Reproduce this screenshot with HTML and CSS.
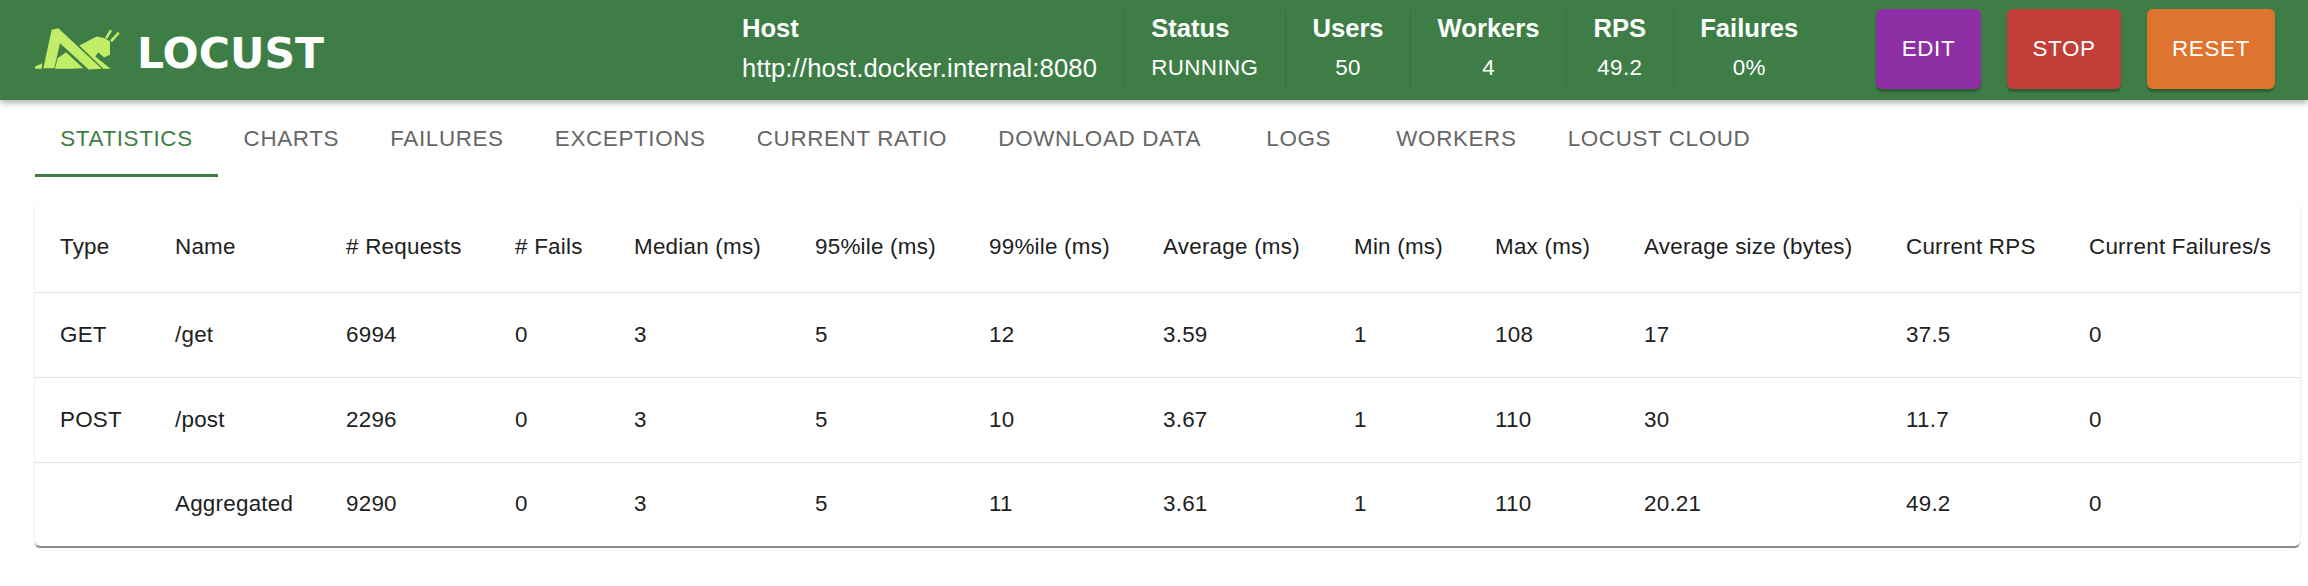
FILE: index.html
```html
<!DOCTYPE html>
<html lang="en">
<head>
    <meta charset="UTF-8">
    <meta name="viewport" content="width=device-width, initial-scale=1.0">
    <title>Locust</title>
    <link rel="stylesheet" href="styles.css">
</head>
<body>
    <!-- Top bar -->
    <header class="navbar">
        <div class="brand">
            <svg class="brand-logo" viewBox="45 40 255 125" width="85" height="42" aria-hidden="true">
                <g fill="#c1ee66">
                    <polygon points="45,162 45,155 67,145 65,162"/>
                    <polygon points="95,45 115,40 245,162 206,164 120,85 103,160 70,160"/>
                    <polygon points="105,162 113,130 138,112 190,160 150,162"/>
                    <polygon points="178,92 230,65 255,70 270,80 270,120 252,128 235,112 226,125 272,162 250,162"/>
                    <polygon points="255,68 270,44 276,48 262,72"/>
                    <polygon points="270,76 294,51 299,56 276,82"/>
                </g>
            </svg>
            <span class="brand-name">LOCUST</span>
        </div>

        <div class="stats">
            <div class="stat stat-left">
                <div class="stat-label">Host</div>
                <div class="stat-value stat-host">http://host.docker.internal:8080</div>
            </div>
            <div class="stat stat-left">
                <div class="stat-label">Status</div>
                <div class="stat-value">RUNNING</div>
            </div>
            <div class="stat">
                <div class="stat-label">Users</div>
                <div class="stat-value">50</div>
            </div>
            <div class="stat">
                <div class="stat-label">Workers</div>
                <div class="stat-value">4</div>
            </div>
            <div class="stat">
                <div class="stat-label">RPS</div>
                <div class="stat-value">49.2</div>
            </div>
            <div class="stat">
                <div class="stat-label">Failures</div>
                <div class="stat-value">0%</div>
            </div>
        </div>

        <div class="actions">
            <button class="btn btn-edit">EDIT</button>
            <button class="btn btn-stop">STOP</button>
            <button class="btn btn-reset">RESET</button>
        </div>
    </header>

    <!-- Tabs -->
    <nav class="tabs">
        <a class="tab active">STATISTICS</a>
        <a class="tab">CHARTS</a>
        <a class="tab">FAILURES</a>
        <a class="tab">EXCEPTIONS</a>
        <a class="tab">CURRENT RATIO</a>
        <a class="tab">DOWNLOAD DATA</a>
        <a class="tab">LOGS</a>
        <a class="tab">WORKERS</a>
        <a class="tab">LOCUST CLOUD</a>
    </nav>

    <!-- Statistics table -->
    <main class="card">
        <table class="stats-table">
            <colgroup>
                <col class="c-type"><col class="c-name"><col class="c-requests"><col class="c-fails">
                <col class="c-median"><col class="c-p95"><col class="c-p99"><col class="c-average">
                <col class="c-min"><col class="c-max"><col class="c-size"><col class="c-rps"><col class="c-fps">
            </colgroup>
            <thead>
                <tr>
                    <th>Type</th><th>Name</th><th># Requests</th><th># Fails</th>
                    <th>Median (ms)</th><th>95%ile (ms)</th><th>99%ile (ms)</th><th>Average (ms)</th>
                    <th>Min (ms)</th><th>Max (ms)</th><th>Average size (bytes)</th><th>Current RPS</th><th>Current Failures/s</th>
                </tr>
            </thead>
            <tbody>
                <tr>
                    <td>GET</td><td>/get</td><td>6994</td><td>0</td><td>3</td><td>5</td><td>12</td>
                    <td>3.59</td><td>1</td><td>108</td><td>17</td><td>37.5</td><td>0</td>
                </tr>
                <tr>
                    <td>POST</td><td>/post</td><td>2296</td><td>0</td><td>3</td><td>5</td><td>10</td>
                    <td>3.67</td><td>1</td><td>110</td><td>30</td><td>11.7</td><td>0</td>
                </tr>
                <tr>
                    <td></td><td>Aggregated</td><td>9290</td><td>0</td><td>3</td><td>5</td><td>11</td>
                    <td>3.61</td><td>1</td><td>110</td><td>20.21</td><td>49.2</td><td>0</td>
                </tr>
            </tbody>
        </table>
    </main>
</body>
</html>
```

FILE: styles.css
```css
* {
    margin: 0;
    padding: 0;
    box-sizing: border-box;
    font-family: 'Liberation Sans', Arial, sans-serif;
}

body {
    background: #fff;
    color: #212121;
}

/* Top bar */
.navbar {
    display: flex;
    align-items: center;
    height: 100px;
    padding: 0 33px 2px 35px;
    background: #3e7e46;
    color: #fff;
    box-shadow: 0 3px 6px rgba(0,0,0,0.3);
}

.brand {
    display: flex;
    align-items: center;
    gap: 17px;
    width: 680.5px;
}

.brand-name {
    margin-top: 8px;
    font-family: 'DejaVu Sans', 'Liberation Sans', sans-serif;
    font-size: 42.5px;
    font-weight: 700;
}

.stats {
    display: flex;
    height: 80px;
}

.stat {
    display: flex;
    flex-direction: column;
    align-items: center;
    justify-content: space-between;
    padding: 1px 26.5px 3px;
    border-right: 1px solid rgba(0,0,0,0.1);
}

.stat:last-child {
    border-right: none;
}

.stat-left {
    align-items: flex-start;
}

.stat-label {
    font-size: 25.6px;
    font-weight: 700;
    line-height: 36px;
}

.stat-value {
    font-size: 22.4px;
    letter-spacing: 0.4px;
    line-height: 36px;
}

.stat-host {
    font-size: 25.6px;
    letter-spacing: 0.16px;
}

.actions {
    display: flex;
    gap: 26px;
    margin-left: auto;
}

.btn {
    width: 105px;
    height: 80px;
    border: none;
    border-radius: 6px;
    color: #fff;
    font-size: 22.4px;
    letter-spacing: 0.64px;
    box-shadow: 0 3px 2px rgba(0,0,0,0.25);
}

.btn-edit { background: #8e2fa6; }
.btn-stop { width: 114px; background: #c13f38; }
.btn-reset { width: 128px; background: #de742d; }

/* Tabs */
.tabs {
    display: flex;
    margin: 0 35px;
    height: 77px;
}

.tab {
    display: flex;
    align-items: center;
    justify-content: center;
    min-width: 144px;
    padding: 0 25.6px;
    color: #666;
    font-size: 22.4px;
    letter-spacing: 0.64px;
}

.tab.active {
    width: 183px;
    padding-top: 3px;
    color: #3e7e46;
    border-bottom: 3px solid #3e7e46;
}

/* Statistics table */
.card {
    margin: 26px 8px 0 35px;
    background: #fff;
    border-bottom: 2px solid #8a8a8a;
    border-radius: 6px;
    box-shadow: 0 1px 1px rgba(0,0,0,0.14), 0 1px 3px rgba(0,0,0,0.12);
    overflow: hidden;
}

.stats-table {
    width: 100%;
    border-collapse: collapse;
    table-layout: fixed;
}

.stats-table th, .stats-table td {
    padding: 0 0 0 25px;
    text-align: left;
    font-size: 22.4px;
    font-weight: 400;
    letter-spacing: 0.24px;
}

.stats-table th {
    height: 89px;
}

.stats-table td {
    height: 85px;
}

.stats-table tr {
    border-bottom: 1px solid #e0e0e0;
}

.stats-table tbody tr:last-child {
    border-bottom: none;
}

.stats-table tbody tr:last-child td {
    height: 84px;
}

.c-type { width: 115px; }
.c-name { width: 171px; }
.c-requests { width: 169px; }
.c-fails { width: 119px; }
.c-median { width: 181px; }
.c-p95 { width: 174px; }
.c-p99 { width: 174px; }
.c-average { width: 191px; }
.c-min { width: 141px; }
.c-max { width: 149px; }
.c-size { width: 262px; }
.c-rps { width: 183px; }
```
